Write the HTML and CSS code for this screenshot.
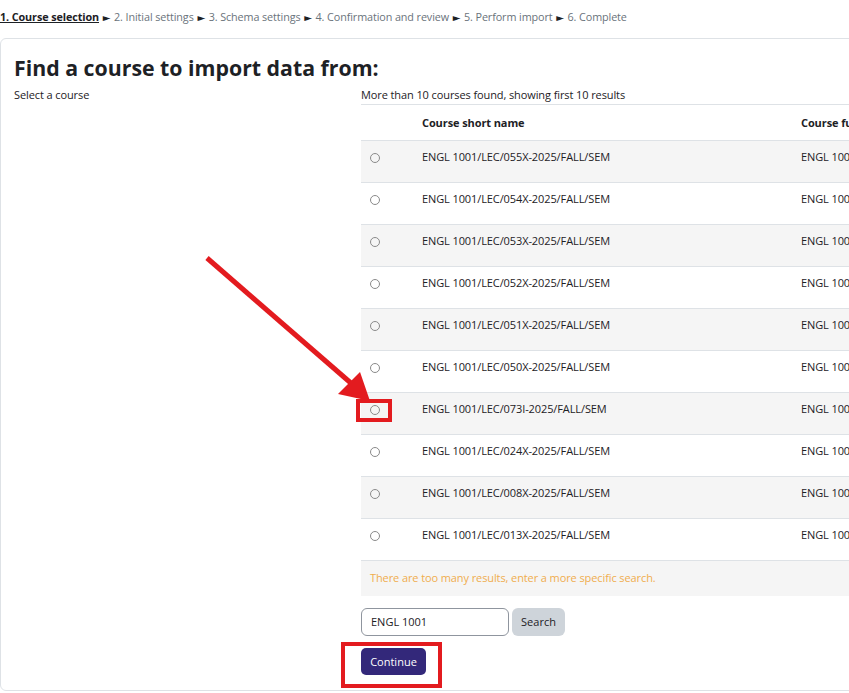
FILE: index.html
```html
<!DOCTYPE html>
<html lang="en">
<head>
    <meta charset="UTF-8">
    <meta name="viewport" content="width=device-width, initial-scale=1.0">
    <title>Import - Course selection</title>
    <link rel="stylesheet" href="styles.css">
</head>
<body>
    <div class="steps">
        <span class="current">1. Course selection</span>
        <span class="sep">&#9658;</span> 2. Initial settings
        <span class="sep">&#9658;</span> 3. Schema settings
        <span class="sep">&#9658;</span> 4. Confirmation and review
        <span class="sep">&#9658;</span> 5. Perform import
        <span class="sep">&#9658;</span> 6. Complete
    </div>

    <div class="card">
        <h2>Find a course to import data from:</h2>
        <div class="form-row">
            <div class="form-label">Select a course</div>
            <div class="form-field">
                <div class="result-count">More than 10 courses found, showing first 10 results</div>
                <table class="course-table">
                    <thead>
                        <tr>
                            <th class="col-select"></th>
                            <th class="col-short">Course short name</th>
                            <th class="col-full">Course full name</th>
                        </tr>
                    </thead>
                    <tbody>
                        <tr><td><input type="radio" name="course"></td><td>ENGL 1001/LEC/055X-2025/FALL/SEM</td><td>ENGL 1001 English Composition I</td></tr>
                        <tr><td><input type="radio" name="course"></td><td>ENGL 1001/LEC/054X-2025/FALL/SEM</td><td>ENGL 1001 English Composition I</td></tr>
                        <tr><td><input type="radio" name="course"></td><td>ENGL 1001/LEC/053X-2025/FALL/SEM</td><td>ENGL 1001 English Composition I</td></tr>
                        <tr><td><input type="radio" name="course"></td><td>ENGL 1001/LEC/052X-2025/FALL/SEM</td><td>ENGL 1001 English Composition I</td></tr>
                        <tr><td><input type="radio" name="course"></td><td>ENGL 1001/LEC/051X-2025/FALL/SEM</td><td>ENGL 1001 English Composition I</td></tr>
                        <tr><td><input type="radio" name="course"></td><td>ENGL 1001/LEC/050X-2025/FALL/SEM</td><td>ENGL 1001 English Composition I</td></tr>
                        <tr><td><input type="radio" name="course"></td><td>ENGL 1001/LEC/073I-2025/FALL/SEM</td><td>ENGL 1001 English Composition I</td></tr>
                        <tr><td><input type="radio" name="course"></td><td>ENGL 1001/LEC/024X-2025/FALL/SEM</td><td>ENGL 1001 English Composition I</td></tr>
                        <tr><td><input type="radio" name="course"></td><td>ENGL 1001/LEC/008X-2025/FALL/SEM</td><td>ENGL 1001 English Composition I</td></tr>
                        <tr><td><input type="radio" name="course"></td><td>ENGL 1001/LEC/013X-2025/FALL/SEM</td><td>ENGL 1001 English Composition I</td></tr>
                        <tr class="notice"><td colspan="3">There are too many results, enter a more specific search.</td></tr>
                    </tbody>
                </table>
                <div class="search-row">
                    <input type="text" class="search-input" value="ENGL 1001">
                    <button type="button" class="btn-secondary">Search</button>
                </div>
                <button type="submit" class="btn-primary">Continue</button>
            </div>
        </div>
    </div>

    <!-- annotation drawn on top of the screenshot -->
    <svg class="annotations" width="849" height="693" viewBox="0 0 849 693">
        <line x1="207" y1="258" x2="352" y2="384" stroke="#e31b1f" stroke-width="5"/>
        <polygon points="338,394 360,372 370,401" fill="#e31b1f"/>
        <rect x="358" y="401" width="32" height="19" fill="none" stroke="#e31b1f" stroke-width="4"/>
        <rect x="343" y="644" width="97" height="42" fill="none" stroke="#e31b1f" stroke-width="4"/>
    </svg>
</body>
</html>
```

FILE: styles.css
```css
html, body {
    overflow: hidden;
}

body {
    margin: 0;
    font-family: 'Open Sans', 'Noto Sans', sans-serif;
    font-size: 11px;
    letter-spacing: -0.1px;
    color: #1d2125;
    background: #fff;
    position: relative;
}

.steps {
    height: 38px;
    line-height: 34px;
    font-size: 10.8px;
    color: #6a737b;
    white-space: nowrap;
}

.steps .current {
    color: #1d2125;
    font-weight: bold;
    text-decoration: underline;
}

.steps .sep {
    font-family: 'DejaVu Sans', sans-serif;
    font-size: 10px;
    margin: 0 1px;
    color: #1d2125;
}

.card {
    width: 1100px;
    border: 1px solid #dee2e6;
    border-radius: 6px;
    padding: 0 0 15px 13px;
}

.card h2 {
    margin: 15px 0 4px;
    font-size: 21.3px;
    line-height: 28px;
    font-weight: bold;
    letter-spacing: 0;
}

.form-row {
    display: flex;
}

.form-label {
    width: 347px;
    line-height: 18px;
}

.result-count {
    line-height: 18px;
}

.course-table {
    width: 720px;
    border-collapse: collapse;
}

.course-table th {
    height: 35px;
    text-align: left;
    padding: 0 10px;
    font-weight: bold;
    border-top: 1px solid #dee2e6;
    border-bottom: 1px solid #dee2e6;
}

.course-table .col-select {
    width: 31px;
}

.course-table .col-short {
    width: 359px;
}

.course-table td {
    height: 42px;
    box-sizing: border-box;
    padding: 9px 10px 0;
    line-height: 14px;
    vertical-align: top;
    border-bottom: 1px solid #dee2e6;
}

.course-table td:first-child {
    padding-left: 9px;
}

.course-table tbody tr:nth-child(odd) {
    background: #f5f5f5;
}

.course-table input[type="radio"] {
    appearance: none;
    width: 10px;
    height: 10px;
    margin: 0;
    border: 1px solid #8a8a8a;
    border-radius: 50%;
    vertical-align: middle;
}

.course-table tr.notice td {
    height: 35px;
    padding: 0 0 0 9px;
    vertical-align: middle;
    color: #f0ad4e;
    border-bottom: none;
}

.search-row {
    display: flex;
    gap: 3px;
    margin-top: 12px;
}

.search-input {
    width: 148px;
    height: 28px;
    box-sizing: border-box;
    padding: 0 9px;
    border: 1px solid #8f959e;
    border-radius: 6px;
    font-family: inherit;
    font-size: 11px;
    color: #1d2125;
}

.btn-secondary {
    width: 53px;
    height: 28px;
    border: none;
    border-radius: 6px;
    background: #ced4da;
    color: #1d2125;
    font-family: inherit;
    font-size: 11px;
}

.btn-primary {
    display: block;
    margin-top: 12px;
    width: 65px;
    height: 27px;
    border: none;
    border-radius: 5px;
    background: #33287a;
    color: #fff;
    font-family: inherit;
    font-size: 11px;
}

.annotations {
    position: absolute;
    top: 0;
    left: 0;
    pointer-events: none;
}
```
